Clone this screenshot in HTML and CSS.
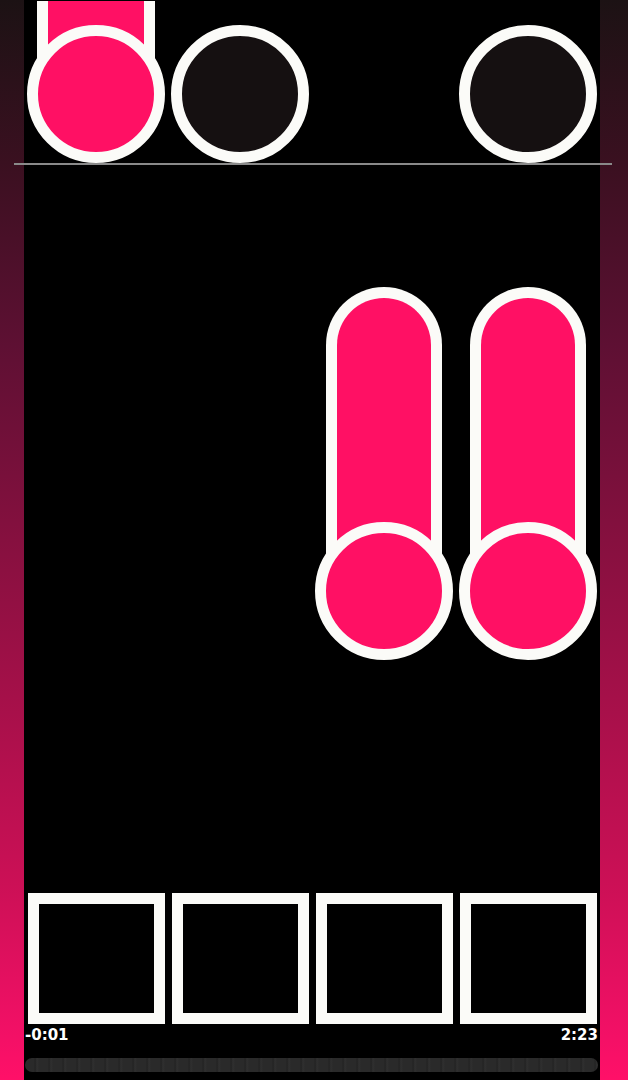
FILE: index.html
```html
<!DOCTYPE html>
<html>
<head>
<meta charset="utf-8">
<link rel="stylesheet" href="styles.css">
</head>
<body>
<div class="screen">
  <div class="side side-left"></div>
  <main class="stage">
    <section class="top-row">
      <div class="cell">
        <div class="thermo thermo-top">
          <div class="stem stem-top"></div>
          <div class="bulb bulb-small pink"></div>
        </div>
      </div>
      <div class="cell"><div class="bulb bulb-small dark"></div></div>
      <div class="cell"></div>
      <div class="cell"><div class="bulb bulb-small dark"></div></div>
    </section>
    <div class="divider"></div>
    <section class="mid-row">
      <div class="cell"></div>
      <div class="cell"></div>
      <div class="cell">
        <div class="thermo">
          <div class="stem"></div>
          <div class="bulb pink"></div>
        </div>
      </div>
      <div class="cell">
        <div class="thermo">
          <div class="stem"></div>
          <div class="bulb pink"></div>
        </div>
      </div>
    </section>
    <section class="pads">
      <div class="pad"></div>
      <div class="pad"></div>
      <div class="pad"></div>
      <div class="pad"></div>
    </section>
    <div class="times">
      <span class="time">-0:01</span>
      <span class="time">2:23</span>
    </div>
    <div class="progress"></div>
  </main>
  <div class="side side-right"></div>
</div>
</body>
</html>
```
FILE: styles.css
```css
html, body {
  margin: 0;
  padding: 0;
  background: #000;
}
.screen {
  display: flex;
  width: 628px;
  height: 1080px;
  overflow: hidden;
}
.side {
  height: 1080px;
  background: linear-gradient(to bottom, #1c1214 0%, #3a1020 15%, #5e1033 32%, #86103f 50%, #a8104a 66%, #cc1056 82%, #f31066 96%, #ff1068 100%);
}
.side-left { width: 24px; }
.side-right { width: 28px; }
.stage {
  width: 576px;
  display: flex;
  flex-direction: column;
  background: #000;
}
.top-row, .mid-row, .pads {
  display: grid;
  grid-template-columns: repeat(4, 144px);
}
.top-row {
  height: 163px;
  align-items: end;
}
.cell {
  display: flex;
  justify-content: center;
  align-items: flex-end;
}
.divider {
  height: 2px;
  background: #8a8a8a;
  margin: 0 -12px 0 -10px;
  position: relative;
}
.thermo {
  display: flex;
  flex-direction: column;
  align-items: center;
}
.stem {
  width: 94px;
  height: 267px;
  background: #ff1064;
  border: 11px solid #fbfbf8;
  border-bottom: none;
  border-radius: 58px 58px 0 0;
  box-sizing: content-box;
}
.stem-top {
  width: 96px;
  height: 60px;
  border-radius: 0;
  border-top: none;
}
.bulb {
  width: 116px;
  height: 116px;
  border: 11px solid #fbfbf8;
  border-radius: 50%;
  position: relative;
  margin-top: -43px;
}
.bulb-small {
  margin-top: 0;
}
.thermo-top .bulb-small {
  margin-top: -36px;
}
.pink { background: #ff1064; }
.dark { background: #151011; }
.mid-row {
  margin-top: 122px;
}
.pads {
  margin-top: 233px;
}
.pad {
  width: 115px;
  height: 109px;
  border: 11px solid #fbfbf8;
  justify-self: center;
  background: #000;
}
.times {
  display: flex;
  justify-content: space-between;
  padding: 2px 2px 0 1px;
  font-family: "DejaVu Sans", "Open Sans", sans-serif;
  font-weight: 700;
  font-size: 15px;
  line-height: 18px;
  color: #fff;
}
.progress {
  margin: 14px 2px 0 1px;
  height: 14px;
  border-radius: 7px;
  background: repeating-linear-gradient(to right, #2a2a2a 0px, #2a2a2a 9px, #222 10px, #303030 12px, #2a2a2a 14px);
}
```
